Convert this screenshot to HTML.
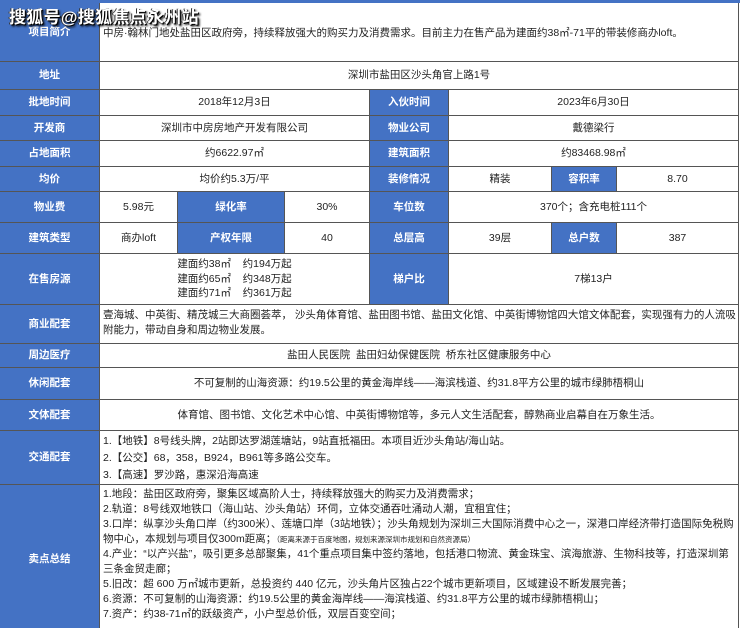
<!DOCTYPE html>
<html><head><meta charset="utf-8"><style>
*{margin:0;padding:0;box-sizing:border-box}
html,body{width:740px;height:628px;overflow:hidden}
body{background:#fff;font-family:"Liberation Sans","Noto Sans CJK SC",sans-serif;font-size:10.5px;color:#222;position:relative}
.c{position:absolute;border-right:1px solid #555;border-bottom:1px solid #555;display:flex;align-items:center;justify-content:center;text-align:center;line-height:15px}
.b{background:#4472c4;color:#fff;font-weight:bold}
.l{display:block;text-align:left;padding-left:3px}
.wm{position:absolute;left:9px;top:3px;font-size:17px;font-weight:bold;color:#fff;text-shadow:1px 1px 0 #000,-1px 0 0 #333,2px 2px 2px #000;letter-spacing:0.3px;z-index:5}
</style></head><body>
<div style="position:absolute;left:0;top:0;width:740px;height:3px;background:#4472c4"></div>
<div class="wm">搜狐号@搜狐焦点永州站</div>

<div class="c b" style="left:0;top:3px;width:100px;height:59px">项目简介</div>
<div class="c l" style="left:100px;top:3px;width:639px;height:59px;padding-top:23px">中房·翰林门地处盐田区政府旁，持续释放强大的购买力及消费需求。目前主力在售产品为建面约38㎡-71平的带装修商办loft。</div>

<div class="c b" style="left:0;top:62px;width:100px;height:28px">地址</div>
<div class="c" style="left:100px;top:62px;width:639px;height:28px">深圳市盐田区沙头角官上路1号</div>

<div class="c b" style="left:0;top:90px;width:100px;height:26px">批地时间</div>
<div class="c" style="left:100px;top:90px;width:270px;height:26px">2018年12月3日</div>
<div class="c b" style="left:370px;top:90px;width:79px;height:26px">入伙时间</div>
<div class="c" style="left:449px;top:90px;width:290px;height:26px">2023年6月30日</div>

<div class="c b" style="left:0;top:116px;width:100px;height:25px">开发商</div>
<div class="c" style="left:100px;top:116px;width:270px;height:25px">深圳市中房房地产开发有限公司</div>
<div class="c b" style="left:370px;top:116px;width:79px;height:25px">物业公司</div>
<div class="c" style="left:449px;top:116px;width:290px;height:25px">戴德梁行</div>

<div class="c b" style="left:0;top:141px;width:100px;height:26px">占地面积</div>
<div class="c" style="left:100px;top:141px;width:270px;height:26px">约6622.97㎡</div>
<div class="c b" style="left:370px;top:141px;width:79px;height:26px">建筑面积</div>
<div class="c" style="left:449px;top:141px;width:290px;height:26px">约83468.98㎡</div>

<div class="c b" style="left:0;top:167px;width:100px;height:25px">均价</div>
<div class="c" style="left:100px;top:167px;width:270px;height:25px">均价约5.3万/平</div>
<div class="c b" style="left:370px;top:167px;width:79px;height:25px">装修情况</div>
<div class="c" style="left:449px;top:167px;width:103px;height:25px">精装</div>
<div class="c b" style="left:552px;top:167px;width:65px;height:25px">容积率</div>
<div class="c" style="left:617px;top:167px;width:122px;height:25px">8.70</div>

<div class="c b" style="left:0;top:192px;width:100px;height:31px">物业费</div>
<div class="c" style="left:100px;top:192px;width:78px;height:31px">5.98元</div>
<div class="c b" style="left:178px;top:192px;width:107px;height:31px">绿化率</div>
<div class="c" style="left:285px;top:192px;width:85px;height:31px">30%</div>
<div class="c b" style="left:370px;top:192px;width:79px;height:31px">车位数</div>
<div class="c" style="left:449px;top:192px;width:290px;height:31px">370个；含充电桩111个</div>

<div class="c b" style="left:0;top:223px;width:100px;height:31px">建筑类型</div>
<div class="c" style="left:100px;top:223px;width:78px;height:31px">商办loft</div>
<div class="c b" style="left:178px;top:223px;width:107px;height:31px">产权年限</div>
<div class="c" style="left:285px;top:223px;width:85px;height:31px">40</div>
<div class="c b" style="left:370px;top:223px;width:79px;height:31px">总层高</div>
<div class="c" style="left:449px;top:223px;width:103px;height:31px">39层</div>
<div class="c b" style="left:552px;top:223px;width:65px;height:31px">总户数</div>
<div class="c" style="left:617px;top:223px;width:122px;height:31px">387</div>

<div class="c b" style="left:0;top:254px;width:100px;height:51px">在售房源</div>
<div class="c" style="left:100px;top:254px;width:270px;height:51px;line-height:14.5px"><div>建面约38㎡&nbsp;&nbsp;&nbsp;&nbsp;约194万起<br>建面约65㎡&nbsp;&nbsp;&nbsp;&nbsp;约348万起<br>建面约71㎡&nbsp;&nbsp;&nbsp;&nbsp;约361万起</div></div>
<div class="c b" style="left:370px;top:254px;width:79px;height:51px">梯户比</div>
<div class="c" style="left:449px;top:254px;width:290px;height:51px">7梯13户</div>

<div class="c b" style="left:0;top:305px;width:100px;height:39px">商业配套</div>
<div class="c l" style="left:100px;top:305px;width:639px;height:39px;padding-top:3px">壹海城、中英街、精茂城三大商圈荟萃， 沙头角体育馆、盐田图书馆、盐田文化馆、中英街博物馆四大馆文体配套，实现强有力的人流吸附能力，带动自身和周边物业发展。</div>

<div class="c b" style="left:0;top:344px;width:100px;height:24px">周边医疗</div>
<div class="c" style="left:100px;top:344px;width:639px;height:24px">盐田人民医院&nbsp;&nbsp;盐田妇幼保健医院&nbsp;&nbsp;桥东社区健康服务中心</div>

<div class="c b" style="left:0;top:368px;width:100px;height:32px">休闲配套</div>
<div class="c" style="left:100px;top:368px;width:639px;height:32px">不可复制的山海资源：约19.5公里的黄金海岸线——海滨栈道、约31.8平方公里的城市绿肺梧桐山</div>

<div class="c b" style="left:0;top:400px;width:100px;height:31px">文体配套</div>
<div class="c" style="left:100px;top:400px;width:639px;height:31px">体育馆、图书馆、文化艺术中心馆、中英街博物馆等，多元人文生活配套，醇熟商业启幕自在万象生活。</div>

<div class="c b" style="left:0;top:431px;width:100px;height:54px">交通配套</div>
<div class="c l" style="left:100px;top:431px;width:639px;height:54px;padding-top:2px;line-height:17px">1.【地铁】8号线头牌，2站即达罗湖莲塘站，9站直抵福田。本项目近沙头角站/海山站。<br>2.【公交】68，358，B924，B961等多路公交车。<br>3.【高速】罗沙路，惠深沿海高速</div>

<div class="c b" style="left:0;top:485px;width:100px;height:150px">卖点总结</div>
<div class="c l" style="left:100px;top:485px;width:639px;height:150px;padding-top:2px;line-height:15px;padding-right:2px">1.地段：盐田区政府旁，聚集区域高阶人士，持续释放强大的购买力及消费需求；<br>2.轨道：8号线双地铁口（海山站、沙头角站）环伺，立体交通吞吐涌动人潮，宜租宜住；<br>3.口岸：纵享沙头角口岸（约300米）、莲塘口岸（3站地铁）；沙头角规划为深圳三大国际消费中心之一，深港口岸经济带打造国际免税购物中心，本规划与项目仅300m距离；<span style="font-size:7.5px">（距离来源于百度地图，规划来源深圳市规划和自然资源局）</span><br>4.产业：“以产兴盐”，吸引更多总部聚集，41个重点项目集中签约落地，包括港口物流、黄金珠宝、滨海旅游、生物科技等，打造深圳第三条金贸走廊；<br>5.旧改：超 600 万㎡城市更新，总投资约 440 亿元，沙头角片区独占22个城市更新项目，区域建设不断发展完善；<br>6.资源：不可复制的山海资源：约19.5公里的黄金海岸线——海滨栈道、约31.8平方公里的城市绿肺梧桐山；<br>7.资产：约38-71㎡的跃级资产，小户型总价低，双层百变空间；</div>
</body></html>
